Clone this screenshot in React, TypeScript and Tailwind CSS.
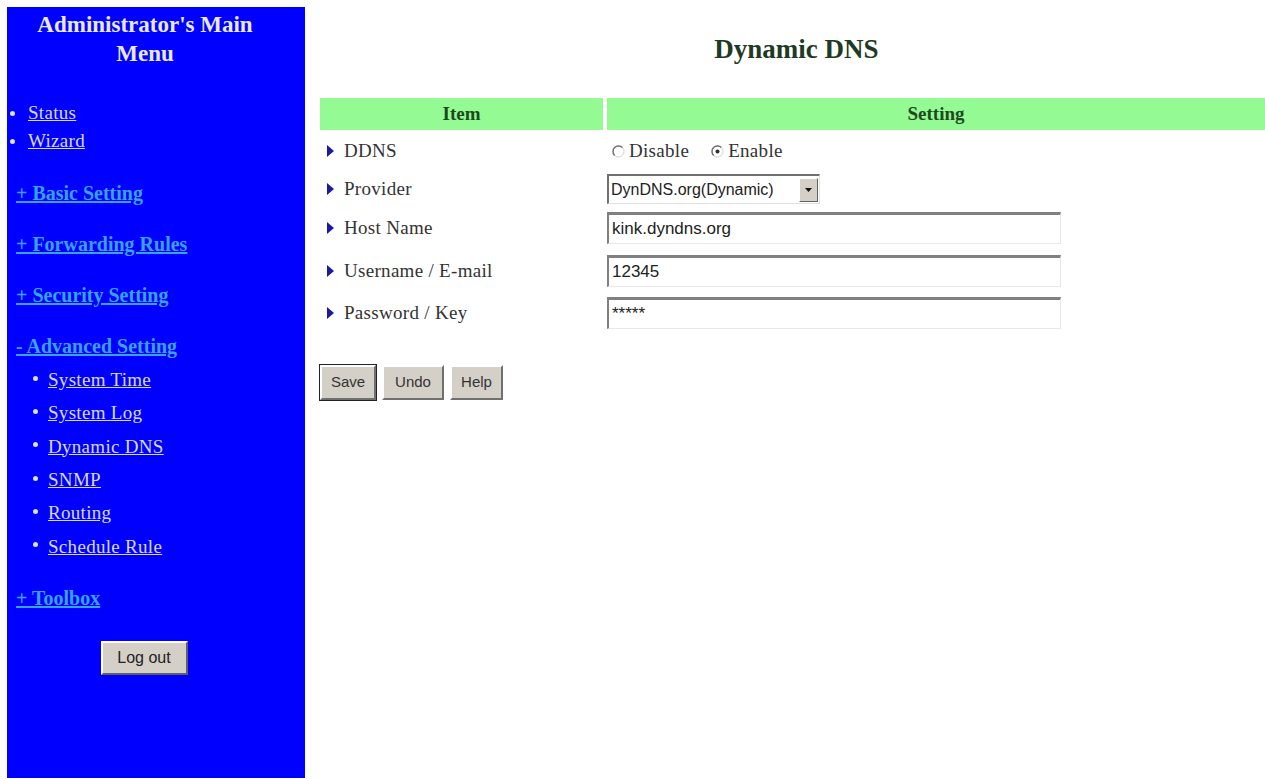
import React from 'react';

const serif = { fontFamily: '"Liberation Serif", "Times New Roman", serif' };
const sans = { fontFamily: '"Liberation Sans", Arial, sans-serif' };

const Arrow = () => (
  <svg width="9" height="14" viewBox="0 0 9 14" className="mr-[9px] shrink-0">
    <path d="M1 1 L8 7 L1 13 Z" fill="#1a1aa0" />
  </svg>
);

const Radio = ({ checked }: { checked?: boolean }) => (
  <svg width="13" height="13" viewBox="0 0 13 13" className="mr-[4px] shrink-0">
    <circle cx="6.5" cy="6.5" r="5.5" fill="#ffffff" stroke="#d0d0d0" strokeWidth="1" />
    <path d="M2.6 10.4 A5.5 5.5 0 0 1 10.4 2.6" fill="none" stroke="#707070" strokeWidth="1.4" />
    {checked && <circle cx="6.5" cy="6.5" r="2" fill="#303030" />}
  </svg>
);

const MenuBlock = ({ label, children }: { label: string; children?: React.ReactNode }) => (
  <div>
    <a className="text-[20px] font-bold text-[#38a2ff] underline leading-[22px] block" style={serif}>
      {label}
    </a>
    {children}
  </div>
);

const subItems = ['System Time', 'System Log', 'Dynamic DNS', 'SNMP', 'Routing', 'Schedule Rule'];

const Sidebar = () => (
  <aside className="ml-[7px] mt-[7px] w-[298px] h-[771px] shrink-0 bg-[#0000ff] text-white" style={serif}>
    <h1 className="pt-[3px] pr-[22px] text-center text-[23px] font-bold leading-[29px] text-[#e8e8f0]">
      Administrator's Main
      <br />
      Menu
    </h1>
    <ul className="mt-[34px] flex flex-col gap-[6px]">
      {['Status', 'Wizard'].map((s) => (
        <li key={s} className="flex items-center h-[22px]">
          <span className="w-[5px] h-[5px] rounded-full bg-[#dde] ml-[3px] mr-[13px]" />
          <a className="text-[19px] tracking-[0.3px] text-[#d8d8e0] underline">{s}</a>
        </li>
      ))}
    </ul>
    <div className="ml-[9px] mt-[30px] flex flex-col gap-[29px]">
      <MenuBlock label="+ Basic Setting" />
      <MenuBlock label="+ Forwarding Rules" />
      <MenuBlock label="+ Security Setting" />
      <MenuBlock label="- Advanced Setting">
        <ul className="mt-[12px] ml-[17px] flex flex-col gap-[11.4px]">
          {subItems.map((s) => (
            <li key={s} className="flex items-center h-[22px]">
              <span className="w-[5px] h-[5px] rounded-full bg-[#dde] mr-[10px] -mt-[4px]" />
              <a className="text-[19px] tracking-[0.3px] text-[#d8d8e0] underline">{s}</a>
            </li>
          ))}
        </ul>
      </MenuBlock>
      <MenuBlock label="+ Toolbox" />
    </div>
    <div className="mt-[32px] flex justify-center pr-[24px]">
      <button
        className="w-[87px] h-[34px] bg-[#d4d0c8] text-[#222] text-[16px] border-2 border-t-white border-l-white border-r-[#606060] border-b-[#606060]"
        style={sans}
      >
        Log out
      </button>
    </div>
  </aside>
);

const TextBox = ({ value }: { value: string }) => (
  <div
    className="w-[454px] h-[32px] bg-white border-t-[3px] border-l-[2px] border-t-[#808080] border-l-[#808080] border-r border-b border-r-[#e8e8e8] border-b-[#e8e8e8] flex items-center pl-[3px] text-[17px] text-[#222]"
    style={sans}
  >
    {value}
  </div>
);

const rows: { label: string; h: string; control: React.ReactNode }[] = [
  {
    label: 'DDNS',
    h: 'h-[42px]',
    control: (
      <div className="flex items-center text-[19px] text-[#333] pl-[5px]" style={serif}>
        <Radio />
        <span className="mr-[22px] tracking-[0.3px]">Disable</span>
        <Radio checked />
        <span className="tracking-[0.3px]">Enable</span>
      </div>
    ),
  },
  {
    label: 'Provider',
    h: 'h-[34px]',
    control: (
      <div
        className="w-[213px] h-[30px] bg-white border-t-[2px] border-l-[2px] border-t-[#707070] border-l-[#707070] border-r border-b border-r-[#e0e0e0] border-b-[#e0e0e0] flex items-center text-[16px] text-[#222]"
        style={sans}
      >
        <span className="flex-1 pl-[2px] whitespace-nowrap overflow-hidden">DynDNS.org(Dynamic)</span>
        <span className="w-[19px] h-[24px] mr-[1px] bg-[#d4d0c8] border border-t-white border-l-white border-r-[#606060] border-b-[#606060] flex items-center justify-center">
          <svg width="7" height="4" viewBox="0 0 7 4">
            <path d="M0 0 L7 0 L3.5 4 Z" fill="#111" />
          </svg>
        </span>
      </div>
    ),
  },
  { label: 'Host Name', h: 'h-[44px]', control: <TextBox value="kink.dyndns.org" /> },
  { label: 'Username / E-mail', h: 'h-[42px]', control: <TextBox value="12345" /> },
  { label: 'Password / Key', h: 'h-[42px]', control: <TextBox value="*****" /> },
];

const Btn = ({ label, w, def }: { label: string; w: string; def?: boolean }) => (
  <button
    className={`${w} h-[35px] bg-[#d4d0c8] text-[#333] text-[15px] border-2 border-t-white border-l-white border-r-[#707070] border-b-[#707070] ${def ? 'outline outline-1 outline-[#222]' : ''}`}
    style={sans}
  >
    {label}
  </button>
);

export default function App() {
  return (
    <div className="flex w-[1265px] h-[779px] bg-white overflow-hidden">
      <Sidebar />
      <main className="flex-1 pl-[15px] pt-[32px]">
        <h2 className="text-center text-[27px] font-bold leading-[34px] text-[#1f3a24] pl-[8px]" style={serif}>
          Dynamic DNS
        </h2>
        <div className="mt-[32px] flex gap-[4px] h-[32px]">
          <div className="w-[283px] bg-[#94fa94] flex items-center justify-center text-[19px] font-bold text-[#1d4a1d]" style={serif}>
            Item
          </div>
          <div className="flex-1 bg-[#94fa94] flex items-center justify-center text-[19px] font-bold text-[#1d4a1d]" style={serif}>
            Setting
          </div>
        </div>
        <div className="flex flex-col">
          {rows.map((r) => (
            <div key={r.label} className={`flex items-center ${r.h}`}>
              <div className="w-[287px] flex items-center pl-[6px] text-[19px] tracking-[0.3px] text-[#333]" style={serif}>
                <Arrow />
                {r.label}
              </div>
              {r.control}
            </div>
          ))}
        </div>
        <div className="mt-[31px] flex gap-[6px]">
          <Btn label="Save" w="w-[56px]" def />
          <Btn label="Undo" w="w-[62px]" />
          <Btn label="Help" w="w-[53px]" />
        </div>
      </main>
    </div>
  );
}
